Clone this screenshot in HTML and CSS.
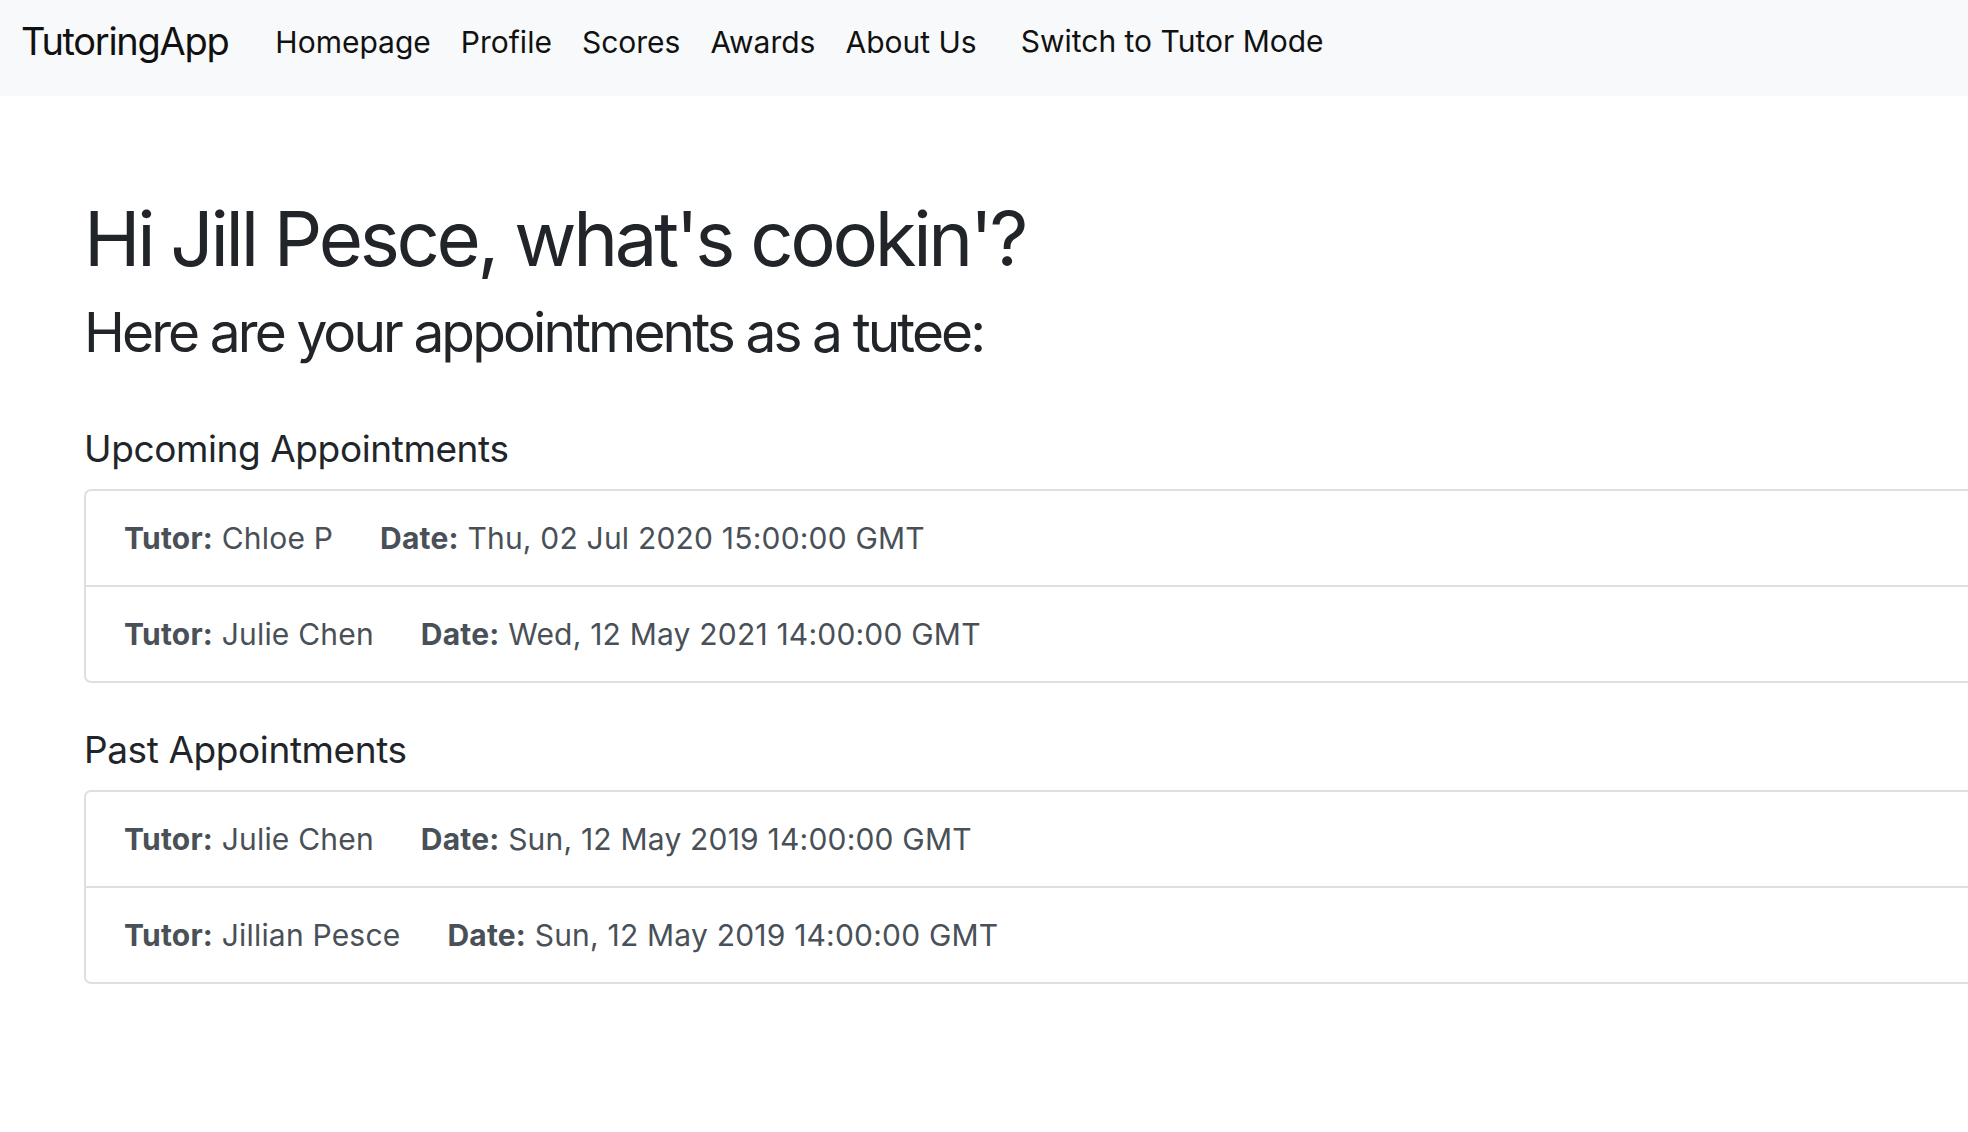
FILE: index.html
```html
<!DOCTYPE html>
<html lang="en">
<head>
<meta charset="utf-8">
<title>TutoringApp</title>
<link rel="stylesheet" href="styles.css">
</head>
<body>
<nav class="navbar">
  <a class="brand" href="#">TutoringApp</a>
  <ul class="nav-links">
    <li><a class="nav-link" href="#">Homepage</a></li>
    <li><a class="nav-link" href="#">Profile</a></li>
    <li><a class="nav-link" href="#">Scores</a></li>
    <li><a class="nav-link" href="#">Awards</a></li>
    <li><a class="nav-link" href="#">About Us</a></li>
  </ul>
  <button class="mode-switch" type="button">Switch to Tutor Mode</button>
</nav>
<main class="content">
  <h1 class="greeting">Hi Jill Pesce, what's cookin'?</h1>
  <h3 class="subtitle">Here are your appointments as a tutee:</h3>

  <h5 class="section-title section-upcoming">Upcoming Appointments</h5>
  <ul class="appt-list">
    <li class="appt-item"><span class="field"><b>Tutor:</b> Chloe P</span><span class="field"><b>Date:</b> Thu, 02 Jul 2020 15:00:00 GMT</span></li>
    <li class="appt-item"><span class="field"><b>Tutor:</b> Julie Chen</span><span class="field"><b>Date:</b> Wed, 12 May 2021 14:00:00 GMT</span></li>
  </ul>

  <h5 class="section-title section-past">Past Appointments</h5>
  <ul class="appt-list">
    <li class="appt-item"><span class="field"><b>Tutor:</b> Julie Chen</span><span class="field"><b>Date:</b> Sun, 12 May 2019 14:00:00 GMT</span></li>
    <li class="appt-item"><span class="field"><b>Tutor:</b> Jillian Pesce</span><span class="field"><b>Date:</b> Sun, 12 May 2019 14:00:00 GMT</span></li>
  </ul>
</main>
</body>
</html>
```

FILE: styles.css
```css
html, body {
  margin: 0;
  padding: 0;
  overflow: hidden;
}
body {
  font-family: Inter, "Noto Sans", "Liberation Sans", sans-serif;
  color: #212529;
  background: #ffffff;
  width: 1968px;
  height: 1132px;
}
.navbar {
  display: flex;
  align-items: flex-start;
  height: 96px;
  box-sizing: border-box;
  padding: 18px 21px 0 21px;
  background: #f8f9fa;
}
.brand {
  font-size: 38px;
  line-height: 46px;
  letter-spacing: -1.3px;
  color: #111;
  text-decoration: none;
  margin-right: 32px;
}
.nav-links {
  display: flex;
  list-style: none;
  margin: 1px 0 0 0;
  padding: 0;
}
.nav-link {
  display: block;
  font-size: 30px;
  line-height: 46px;
  padding: 0 15px;
  color: #111;
  text-decoration: none;
}
.mode-switch {
  font-family: inherit;
  font-size: 30px;
  line-height: 46px;
  color: #111;
  background: none;
  border: 0;
  padding: 0 15px;
  margin-left: 14px;
}
.content {
  padding-left: 84px;
  width: 2100px;
}
.greeting {
  font-size: 76px;
  font-weight: 400;
  line-height: 91px;
  letter-spacing: -3.3px;
  margin: 97px 0 0 0;
}
.subtitle {
  font-size: 55px;
  font-weight: 400;
  line-height: 66px;
  letter-spacing: -2.9px;
  margin: 15px 0 0 0;
}
.section-title {
  font-size: 37px;
  font-weight: 400;
  line-height: 44px;
  letter-spacing: -0.4px;
  margin: 0 0 18px 0;
}
.section-upcoming {
  margin-top: 62px;
}
.section-past {
  margin-top: 45px;
}
.appt-list {
  list-style: none;
  margin: 0;
  padding: 0;
  border: 2px solid #dfdfdf;
  border-radius: 7px;
}
.appt-item {
  display: flex;
  gap: 47px;
  padding: 24px 38px;
  font-size: 30px;
  line-height: 46px;
  letter-spacing: 0.2px;
  color: #495057;
}
.appt-item + .appt-item {
  border-top: 2px solid #dfdfdf;
}
.appt-item b {
  font-weight: 700;
}
```
